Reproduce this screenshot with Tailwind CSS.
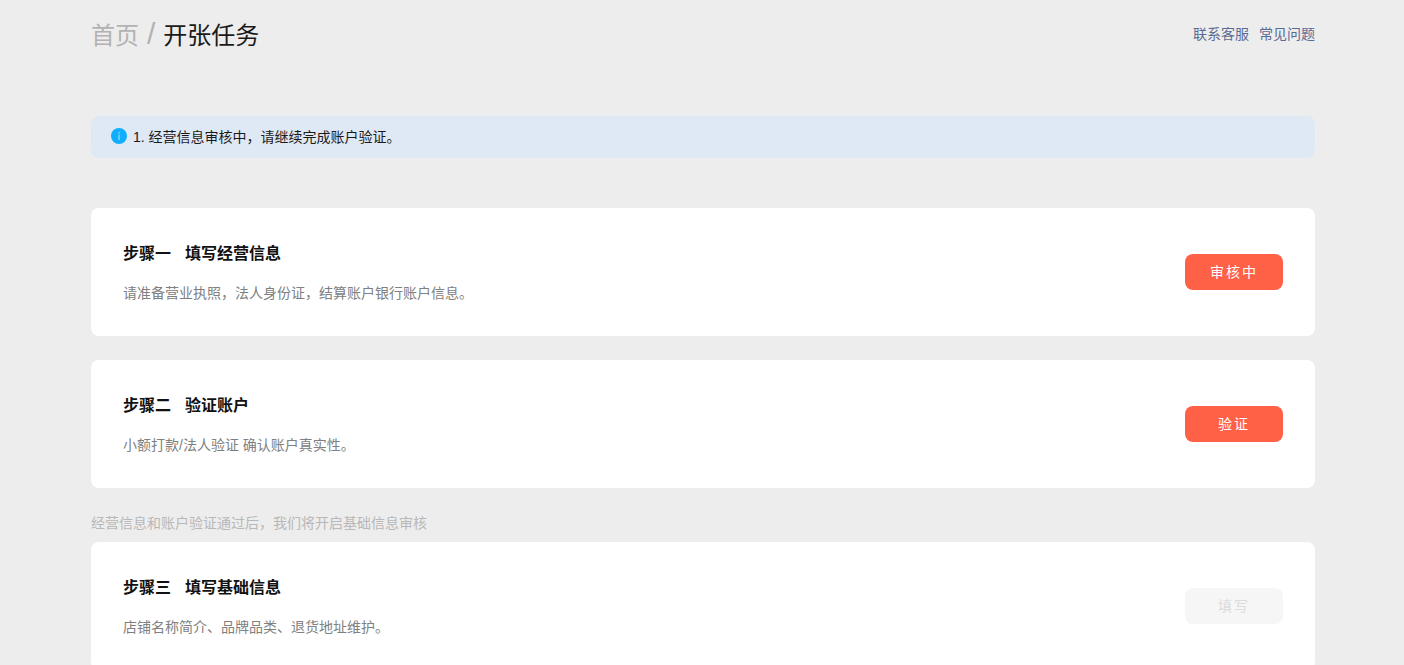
<!DOCTYPE html>
<html lang="zh-CN">
<head>
<meta charset="utf-8">
<title>开张任务</title>
<script src="https://cdn.jsdelivr.net/npm/@tailwindcss/browser@4"></script>
</head>
<body class="h-[665px] overflow-hidden bg-[#ededed] font-['Liberation_Sans','Noto_Sans_CJK_SC',sans-serif]">
<main class="ml-[91px] w-[1224px]">
  <header class="flex h-[68px] items-center justify-between">
    <h1 class="pt-0.5 text-2xl font-normal text-[#1a1a1a]"><span class="text-[#b2b2b2]">首页<span class="mx-2 text-[30px] leading-none">/</span></span>开张任务</h1>
    <nav class="flex gap-2.5 text-sm text-[#576b95]"><a>联系客服</a><a>常见问题</a></nav>
  </header>
  <div class="mt-12 flex h-[42px] items-center gap-1.5 rounded-lg bg-[#dfe9f5] pl-5 text-sm text-[#1a1a1a]">
    <svg class="mb-0.5 size-4" viewBox="0 0 16 16"><circle cx="8" cy="8" r="8" fill="#10aeff"/><rect x="7.3" y="6.6" width="1.4" height="5.4" fill="#8fd8ff"/><rect x="7.3" y="4" width="1.4" height="1.5" fill="#8fd8ff"/></svg>
    <span>1. 经营信息审核中，请继续完成账户验证。</span>
  </div>
  <section class="mt-[50px] flex h-32 items-center justify-between rounded-lg bg-white pl-8 pr-8">
    <div class="pt-0.5">
      <h2 class="text-base/6 font-bold text-[#111]">步骤一<span class="ml-3.5">填写经营信息</span></h2>
      <p class="mt-4 text-sm/[22px] text-[#808080]">请准备营业执照，法人身份证，结算账户银行账户信息。</p>
    </div>
    <button class="h-9 w-[98px] rounded-lg bg-[#ff6146] text-sm tracking-[2px] text-white">审核中</button>
  </section>
  <section class="mt-6 flex h-32 items-center justify-between rounded-lg bg-white pl-8 pr-8">
    <div class="pt-0.5">
      <h2 class="text-base/6 font-bold text-[#111]">步骤二<span class="ml-3.5">验证账户</span></h2>
      <p class="mt-4 text-sm/[22px] text-[#808080]">小额打款/法人验证 确认账户真实性。</p>
    </div>
    <button class="h-9 w-[98px] rounded-lg bg-[#ff6146] text-sm tracking-[2px] text-white">验证</button>
  </section>
  <p class="mt-[25px] text-sm/5 text-[#b8b8b8]">经营信息和账户验证通过后，我们将开启基础信息审核</p>
  <section class="mt-[9px] flex h-32 items-center justify-between rounded-lg bg-white pl-8 pr-8">
    <div class="pt-0.5">
      <h2 class="text-base/6 font-bold text-[#111]">步骤三<span class="ml-3.5">填写基础信息</span></h2>
      <p class="mt-4 text-sm/[22px] text-[#808080]">店铺名称简介、品牌品类、退货地址维护。</p>
    </div>
    <button class="h-9 w-[98px] rounded-lg bg-[#f6f6f6] text-sm tracking-[2px] text-[#dcdcdc]">填写</button>
  </section>
</main>
</body>
</html>
